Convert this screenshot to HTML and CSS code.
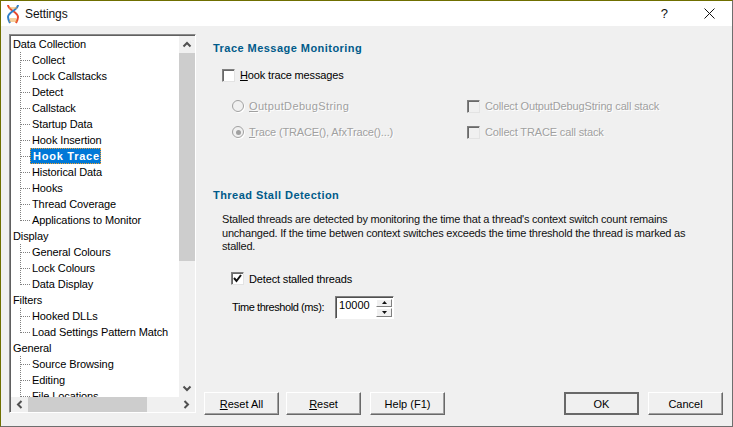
FILE: index.html
```html
<!DOCTYPE html>
<html lang="en">
<head>
<meta charset="utf-8">
<title>Settings</title>
<link rel="stylesheet" href="styles.css">
</head>
<body>
<div class="window">
  <header class="titlebar">
    <svg class="app-icon" width="14" height="20" viewBox="0 0 14 20">
      <path d="M2 1C2 6 12 8 12 13C12 15 11 17 10 19" fill="none" stroke="#e8482c" stroke-width="2"/>
      <path d="M12 1C12 6 2 8 2 13C2 15 3 17 4 19" fill="none" stroke="#2f7fc8" stroke-width="2"/>
      <path d="M3 4H11M4 15H10M3 17H11" stroke="#e9a23b" stroke-width="1.2"/>
    </svg>
    <span class="title">Settings</span>
    <span class="help-btn">?</span>
    <svg class="close-btn" width="11" height="11" viewBox="0 0 11 11"><path d="M0.5 0.5L10.5 10.5M10.5 0.5L0.5 10.5" stroke="#111" stroke-width="1" fill="none"/></svg>
  </header>
  <div class="main">
    <aside class="tree-frame">
      <div class="tree-top">
        <ul class="tree">
          <li class="root">Data Collection</li>
          <li class="child">Collect</li>
          <li class="child">Lock Callstacks</li>
          <li class="child">Detect</li>
          <li class="child">Callstack</li>
          <li class="child">Startup Data</li>
          <li class="child">Hook Insertion</li>
          <li class="child selected"><span>Hook Trace</span></li>
          <li class="child">Historical Data</li>
          <li class="child">Hooks</li>
          <li class="child">Thread Coverage</li>
          <li class="child last">Applications to Monitor</li>
          <li class="root">Display</li>
          <li class="child">General Colours</li>
          <li class="child">Lock Colours</li>
          <li class="child last">Data Display</li>
          <li class="root">Filters</li>
          <li class="child">Hooked DLLs</li>
          <li class="child last">Load Settings Pattern Match</li>
          <li class="root">General</li>
          <li class="child">Source Browsing</li>
          <li class="child">Editing</li>
          <li class="child">File Locations</li>
        </ul>
        <div class="vscroll">
          <svg class="arrow" width="16" height="17" viewBox="0 0 16 17"><path d="M4.5 10.5L8 7L11.5 10.5" fill="none" stroke="#505050" stroke-width="2"/></svg>
          <div class="vthumb"></div>
          <div class="vtrack"></div>
          <svg class="arrow" width="16" height="17" viewBox="0 0 16 17"><path d="M4.5 6.5L8 10L11.5 6.5" fill="none" stroke="#505050" stroke-width="2"/></svg>
        </div>
      </div>
      <div class="hscroll">
        <svg class="arrow-h" width="17" height="15" viewBox="0 0 17 15"><path d="M10.5 4L7 7.5L10.5 11" fill="none" stroke="#505050" stroke-width="2"/></svg>
        <div class="hthumb"></div>
        <div class="htrack"></div>
        <svg class="arrow-h" width="17" height="15" viewBox="0 0 17 15"><path d="M6.5 4L10 7.5L6.5 11" fill="none" stroke="#505050" stroke-width="2"/></svg>
      </div>
    </aside>
    <section class="panel">
      <div class="content">
        <h2 class="heading">Trace Message Monitoring</h2>
        <label class="check-row hook"><span class="check"></span><span><u>H</u>ook trace messages</span></label>
        <div class="option-grid">
          <div class="opt"><span class="radio"></span><span class="wide"><u>O</u>utputDebugString</span></div>
          <div class="opt"><span class="check disabled"></span><span>Collect OutputDebugString call stack</span></div>
          <div class="opt"><span class="radio on"></span><span><u>T</u>race (TRACE(), AfxTrace()...)</span></div>
          <div class="opt"><span class="check disabled"></span><span>Collect TRACE call stack</span></div>
        </div>
        <h2 class="heading second">Thread Stall Detection</h2>
        <p class="desc">Stalled threads are detected by monitoring the time that a thread's context switch count remains unchanged. If the time betwen context switches exceeds the time threshold the thread is marked as stalled.</p>
        <label class="check-row detect"><span class="check">
          <svg width="9" height="9" viewBox="0 0 9 9"><path d="M1 4L3.5 7L8 1" fill="none" stroke="#111" stroke-width="2"/></svg>
        </span><span>Detect stalled threads</span></label>
        <div class="threshold">
          <span class="threshold-label">Time threshold (ms):</span>
          <div class="spin">
            <span class="spin-value">10000</span>
            <div class="spin-btns">
              <span class="spin-btn"><svg width="5" height="3" viewBox="0 0 5 3"><path d="M2.5 0L5 3H0Z" fill="#111"/></svg></span>
              <span class="spin-btn"><svg width="5" height="3" viewBox="0 0 5 3"><path d="M0 0H5L2.5 3Z" fill="#111"/></svg></span>
            </div>
          </div>
        </div>
      </div>
      <footer class="buttons">
        <button class="btn first"><u>R</u>eset All</button>
        <button class="btn"><u>R</u>eset</button>
        <button class="btn help">Help (F1)</button>
        <button class="btn ok">OK</button>
        <button class="btn">Cancel</button>
      </footer>
    </section>
  </div>
</div>
</body>
</html>
```
FILE: styles.css
```css
* { box-sizing: border-box; }
html, body { margin: 0; padding: 0; }
body {
  width: 733px;
  height: 427px;
  overflow: hidden;
  font-family: "Liberation Sans", Arial, sans-serif;
  font-size: 11px;
  color: #000;
  background: #f0f0f0;
}
.window {
  width: 733px;
  height: 427px;
  display: flex;
  flex-direction: column;
  border: 1px solid #6e6e6e;
  border-top-color: #6f6f00;
  border-left-color: #6f6f00;
}
.titlebar {
  height: 25px;
  flex: none;
  background: #fff;
  display: flex;
  align-items: center;
  padding-left: 5px;
}
.app-icon { flex: none; margin-right: 5px; }
.title { font-size: 12px; flex: 1; color: #111; letter-spacing: -0.1px; }
.help-btn { font-size: 13px; margin-right: 36px; color: #111; font-weight: 400; }
.close-btn { margin-right: 17px; }
.main { flex: 1; display: flex; min-height: 0; }
.tree-frame {
  width: 187px;
  height: 379px;
  margin: 8px 0 0 8px;
  flex: none;
  display: flex;
  flex-direction: column;
  background: #fff;
  border: 1px solid #fff;
  border-top-color: #8a8a8a;
  border-left-color: #8a8a8a;
  box-shadow: inset 1px 1px 0 #606060;
  padding: 1px 0 0 1px;
}
.tree-top { flex: 1; display: flex; min-height: 0; }
.tree {
  list-style: none;
  margin: 0;
  padding: 0;
  flex: 1;
  overflow: hidden;
  letter-spacing: -0.1px;
}
.tree li { height: 16px; line-height: 16px; white-space: nowrap; }
.root { padding-left: 2px; }
.child {
  padding-left: 21px;
  background-image:
    repeating-linear-gradient(to bottom, #808080 0 1px, transparent 1px 2px),
    repeating-linear-gradient(to right, #808080 0 1px, transparent 1px 2px);
  background-repeat: no-repeat;
  background-size: 1px 16px, 9px 1px;
  background-position: 9px 0, 10px 8px;
}
.child.last { background-size: 1px 9px, 9px 1px; }
.selected span {
  display: inline-block;
  height: 16px;
  line-height: 16px;
  margin-left: -2px;
  padding: 0 1px 0 3px;
  background: #0078d7;
  color: #fff;
  font-weight: 700;
  letter-spacing: 0.75px;
  outline: 1px dotted #f0a030;
  outline-offset: -1px;
}
.vscroll { width: 16px; flex: none; display: flex; flex-direction: column; background: #f0f0f0; }
.arrow { flex: none; display: block; }
.vthumb { height: 208px; flex: none; background: #cdcdcd; }
.vtrack { flex: 1; }
.hscroll { height: 15px; flex: none; display: flex; background: #f0f0f0; }
.arrow-h { flex: none; display: block; }
.hthumb { width: 119px; flex: none; background: #cdcdcd; }
.htrack { flex: 1; }
.panel { flex: 1; display: flex; flex-direction: column; min-width: 0; padding-left: 8px; }
.content { flex: 1; padding-left: 9px; }
.heading {
  margin: 0;
  font-size: 11px;
  line-height: 14px;
  font-weight: 700;
  color: #005b8a;
  letter-spacing: 0.46px;
  padding-top: 15px;
}
.heading.second { padding-top: 0; margin-top: 43px; }
.check-row { display: flex; align-items: center; gap: 5px; }
.hook { margin: 13px 0 0 9px; height: 14px; letter-spacing: -0.15px; }
.check {
  width: 13px;
  height: 13px;
  flex: none;
  display: flex;
  align-items: center;
  justify-content: center;
  background: #fff;
  border: 1px solid #808080;
  border-right-color: #e3e3e3;
  border-bottom-color: #e3e3e3;
  box-shadow: inset 1px 1px 0 #696969;
}
.check.disabled { background: #f0f0f0; }
.option-grid {
  display: grid;
  grid-template-columns: 235px 1fr;
  grid-auto-rows: 26px;
  margin: 11px 0 0 19px;
  color: #a0a0a0;
  text-shadow: 1px 1px 0 #fff;
  letter-spacing: -0.14px;
}
.opt { display: flex; align-items: center; gap: 5px; }
.wide { letter-spacing: 0.35px; }
.radio {
  width: 12px;
  height: 12px;
  flex: none;
  border-radius: 50%;
  background: #f0f0f0;
  border: 1px solid #a0a0a0;
  box-shadow: 1px 1px 0 #fff;
  display: flex;
  align-items: center;
  justify-content: center;
}
.radio.on::after { content: ""; width: 5px; height: 5px; border-radius: 50%; background: #a0a0a0; }
.desc {
  margin: 11px 0 0 9px;
  width: 490px;
  line-height: 13.5px;
  color: #111;
  letter-spacing: -0.21px;
}
.detect { margin: 18px 0 0 18px; height: 14px; letter-spacing: -0.15px; }
.threshold { display: flex; align-items: center; gap: 11px; margin: 10px 0 0 19px; }
.threshold-label { letter-spacing: -0.42px; }
.spin {
  width: 59px;
  height: 23px;
  display: flex;
  background: #fff;
  border: 1px solid #808080;
  border-right-color: #fff;
  border-bottom-color: #fff;
  box-shadow: inset 1px 1px 0 #505050;
  padding: 2px 1px 1px 3px;
}
.spin-value { flex: 1; font-size: 11px; line-height: 13px; }
.spin-btns { width: 16px; display: flex; flex-direction: column; gap: 1px; }
.spin-btn {
  flex: 1;
  display: flex;
  align-items: center;
  justify-content: center;
  background: #f0f0f0;
  border: 1px solid #fff;
  border-right-color: #808080;
  border-bottom-color: #808080;
}
.buttons { display: flex; height: 23px; margin-bottom: 11px; flex: none; }
.btn {
  width: 75px;
  height: 23px;
  padding: 0;
  font: inherit;
  color: #000;
  background: #f0f0f0;
  border: 1px solid #fff;
  border-right-color: #696969;
  border-bottom-color: #696969;
  box-shadow: inset -1px -1px 0 #a0a0a0;
  margin-right: 9px;
}
.btn.first { margin-right: 7px; }
.btn.help { margin-right: 119px; }
.btn.ok { border: 2px solid #696969; box-shadow: none; }
```
